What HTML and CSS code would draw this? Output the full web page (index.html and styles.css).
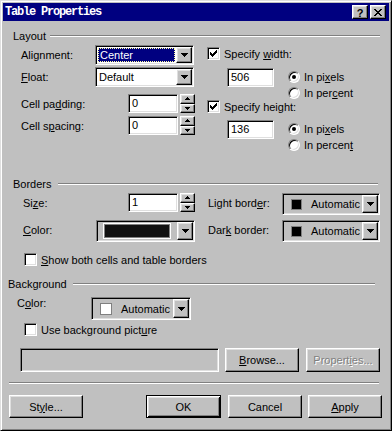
FILE: index.html
```html
<!DOCTYPE html>
<html lang="en">
<head>
  <meta charset="UTF-8">
  <meta name="viewport" content="width=device-width, initial-scale=1.0">
  <title>Table Properties</title>
  <link rel="stylesheet" href="styles.css">
</head>
<body>
  <div class="window">
    <div class="titlebar">
      <span class="title">Table Properties</span>
      <span class="tbtn raised help">?</span>
      <span class="tbtn raised"><svg width="8" height="7" viewBox="0 0 8 7"><path d="M0 0h2v1h1v1h2v-1h1v-1h2v1h-1v1h-1v1h-1v1h1v1h1v1h1v1h-2v-1h-1v-1h-2v1h-1v1h-2v-1h1v-1h1v-1h1v-1h-1v-1h-1v-1h-1z" fill="#000"/></svg></span>
    </div>

    <!-- Layout -->
    <div class="group-head head-layout"><span>Layout</span><i class="etch"></i></div>
    <div class="layout">
      <div class="col-left">
        <div class="row">
          <span class="lbl w74">Alignment:</span>
          <div class="combo sunken w99">
            <span class="val sel"><span>Center</span></span>
            <span class="drop raised"><svg width="7" height="4" viewBox="0 0 7 4"><path d="M0 0h7v1h-1v1h-1v1h-1v1h-1v-1h-1v-1h-1v-1h-1z"/></svg></span>
          </div>
        </div>
        <div class="row mt2">
          <span class="lbl w74"><u>F</u>loat:</span>
          <div class="combo sunken w99">
            <span class="val">Default</span>
            <span class="drop raised"><svg width="7" height="4" viewBox="0 0 7 4"><path d="M0 0h7v1h-1v1h-1v1h-1v1h-1v-1h-1v-1h-1v-1h-1z"/></svg></span>
          </div>
        </div>
        <div class="row mt7">
          <span class="lbl w107">Cell pa<u>d</u>ding:</span>
          <div class="spin">
            <span class="field sunken">0</span>
            <span class="spinner">
              <span class="sbtn raised"><svg width="5" height="3" viewBox="0 0 5 3"><path d="M0 3h5v-1h-1v-1h-1v-1h-1v1h-1v1h-1z"/></svg></span>
              <span class="sbtn raised"><svg width="5" height="3" viewBox="0 0 5 3"><path d="M0 0h5v1h-1v1h-1v1h-1v-1h-1v-1h-1z"/></svg></span>
            </span>
          </div>
        </div>
        <div class="row mt3">
          <span class="lbl w107">Cell s<u>p</u>acing:</span>
          <div class="spin">
            <span class="field sunken">0</span>
            <span class="spinner">
              <span class="sbtn raised"><svg width="5" height="3" viewBox="0 0 5 3"><path d="M0 3h5v-1h-1v-1h-1v-1h-1v1h-1v1h-1z"/></svg></span>
              <span class="sbtn raised"><svg width="5" height="3" viewBox="0 0 5 3"><path d="M0 0h5v1h-1v1h-1v1h-1v-1h-1v-1h-1z"/></svg></span>
            </span>
          </div>
        </div>
      </div>

      <div class="col-right">
        <div class="cb-row mt2">
          <span class="check sunken"><svg width="7" height="7" viewBox="0 0 7 7"><path d="M0 2h1v1h1v1h1v-1h1v-1h1v-1h1v-1h1v3h-1v1h-1v1h-1v1h-1v1h-1v-1h-1v-1h-1z"/></svg></span>
          <span>Specify <u>w</u>idth:</span>
        </div>
        <div class="in-row mt8">
          <span class="field sunken num">506</span>
          <div class="radios">
            <div class="radio-row"><span class="radio on"></span><span>In pi<u>x</u>els</span></div>
            <div class="radio-row"><span class="radio"></span><span>In per<u>c</u>ent</span></div>
          </div>
        </div>
        <div class="cb-row mt1">
          <span class="check sunken"><svg width="7" height="7" viewBox="0 0 7 7"><path d="M0 2h1v1h1v1h1v-1h1v-1h1v-1h1v-1h1v3h-1v1h-1v1h-1v1h-1v1h-1v-1h-1v-1h-1z"/></svg></span>
          <span>Specify hei<u>g</u>ht:</span>
        </div>
        <div class="in-row mt7">
          <span class="field sunken num">136</span>
          <div class="radios">
            <div class="radio-row"><span class="radio on"></span><span>In pi<u>x</u>els</span></div>
            <div class="radio-row"><span class="radio"></span><span>In percen<u>t</u></span></div>
          </div>
        </div>
      </div>
    </div>

    <!-- Borders -->
    <div class="group-head head-borders"><span>Borders</span><i class="etch"></i></div>
    <div class="b-row mt3">
      <span class="lbl w105 lh20">Si<u>z</u>e:</span>
      <div class="spin">
        <span class="field sunken">1</span>
        <span class="spinner">
          <span class="sbtn raised"><svg width="5" height="3" viewBox="0 0 5 3"><path d="M0 3h5v-1h-1v-1h-1v-1h-1v1h-1v1h-1z"/></svg></span>
          <span class="sbtn raised"><svg width="5" height="3" viewBox="0 0 5 3"><path d="M0 0h5v1h-1v1h-1v1h-1v-1h-1v-1h-1z"/></svg></span>
        </span>
      </div>
      <span class="lbl w74 side">Light bord<u>e</u>r:</span>
      <div class="ccombo sunken w98">
        <span class="swatch dark"></span>
        <span class="cval">Automatic</span>
        <span class="drop raised"><svg width="7" height="4" viewBox="0 0 7 4"><path d="M0 0h7v1h-1v1h-1v1h-1v1h-1v-1h-1v-1h-1v-1h-1z"/></svg></span>
      </div>
    </div>
    <div class="b-row mt5">
      <span class="lbl w73"><u>C</u>olor:</span>
      <div class="ccombo sunken w99">
        <span class="bar"></span>
        <span class="drop raised"><svg width="7" height="4" viewBox="0 0 7 4"><path d="M0 0h7v1h-1v1h-1v1h-1v1h-1v-1h-1v-1h-1v-1h-1z"/></svg></span>
      </div>
      <span class="lbl w74 side">Dar<u>k</u> border:</span>
      <div class="ccombo sunken w98">
        <span class="swatch dark"></span>
        <span class="cval">Automatic</span>
        <span class="drop raised"><svg width="7" height="4" viewBox="0 0 7 4"><path d="M0 0h7v1h-1v1h-1v1h-1v1h-1v-1h-1v-1h-1v-1h-1z"/></svg></span>
      </div>
    </div>
    <div class="cb-row cb-indent mt11">
      <span class="check sunken"></span>
      <span><u>S</u>how both cells and table borders</span>
    </div>

    <!-- Background -->
    <div class="group-head head-bg"><span>Background</span><i class="etch"></i></div>
    <div class="bg-row">
      <span class="lbl w74">C<u>o</u>lor:</span>
      <div class="ccombo sunken w100">
        <span class="swatch light"></span>
        <span class="cval">Automatic</span>
        <span class="drop raised"><svg width="7" height="4" viewBox="0 0 7 4"><path d="M0 0h7v1h-1v1h-1v1h-1v1h-1v-1h-1v-1h-1v-1h-1z"/></svg></span>
      </div>
    </div>
    <div class="cb-row cb-indent mt3">
      <span class="check sunken"></span>
      <span>Use background pict<u>u</u>re</span>
    </div>
    <div class="file-row">
      <span class="field sunken file gray"></span>
      <span class="btn raised browse"><u>B</u>rowse...</span>
      <span class="btn raised props disabled">Propert<u>i</u>es...</span>
    </div>

    <i class="etch sep"></i>

    <div class="btn-row">
      <span class="btn raised">St<u>y</u>le...</span>
      <span class="btn raised default ok">OK</span>
      <span class="btn raised cancel">Cancel</span>
      <span class="btn raised apply"><u>A</u>pply</span>
    </div>
  </div>
</body>
</html>
```

FILE: styles.css
```css
body {
  margin: 0;
  background: #c0c0c0;
  font-family: "Liberation Sans", Arial, sans-serif;
  font-size: 11px;
  color: #000;
}
u {
  text-decoration: underline;
  text-underline-offset: 1px;
}
.window {
  width: 392px;
  height: 431px;
  box-sizing: border-box;
  background: #c0c0c0;
  border: 1px solid;
  border-color: #dfdfdf #000 #000 #dfdfdf;
  box-shadow: inset 1px 1px #fff, inset -1px -1px #808080;
  padding: 2px;
}

/* 3d frames */
.raised {
  box-sizing: border-box;
  background: #c0c0c0;
  border: 1px solid;
  border-color: #fff #000 #000 #fff;
  box-shadow: inset -1px -1px #808080, inset 1px 1px #dfdfdf;
}
.sunken {
  box-sizing: border-box;
  background: #fff;
  border: 1px solid;
  border-color: #808080 #fff #fff #808080;
  box-shadow: inset 1px 1px #000, inset -1px -1px #dfdfdf;
  padding: 1px;
}
.etch {
  display: block;
  height: 0;
  border-top: 1px solid #808080;
  border-bottom: 1px solid #fff;
}

/* title bar */
.titlebar {
  display: flex;
  align-items: center;
  height: 18px;
  background: #000080;
  color: #fff;
  padding: 0 3px 0 2px;
}
.title {
  flex: 1;
  font-family: "Liberation Mono", "Courier New", monospace;
  font-weight: bold;
  font-size: 12px;
  letter-spacing: -1.2px;
}
.tbtn {
  width: 16px;
  height: 14px;
  margin-left: 2px;
  display: flex;
  align-items: center;
  justify-content: center;
  color: #000;
}
.help {
  font-weight: bold;
  font-size: 11px;
  padding-top: 1px;
}

/* group headers */
.group-head {
  display: flex;
  align-items: center;
  height: 13px;
}
.group-head .etch {
  flex: 1;
  margin-left: 4px;
}
.head-layout {
  margin-top: 8px;
  padding-left: 10px;
  margin-right: 9px;
}
.head-borders {
  margin-top: 26px;
  padding-left: 10px;
  margin-right: 11px;
}
.head-borders .etch {
  margin-left: 6px;
}
.head-bg {
  margin-top: 11px;
  padding-left: 5px;
  margin-right: 14px;
}
.head-bg .etch {
  margin-left: 6px;
}

.mt1 { margin-top: 1px; }
.mt2 { margin-top: 2px; }
.mt3 { margin-top: 3px; }
.mt5 { margin-top: 5px; }
.mt7 { margin-top: 7px; }
.mt8 { margin-top: 8px; }
.mt11 { margin-top: 11px; }

.lbl { flex: none; }
.w73 { width: 73px; }
.w74 { width: 74px; }
.w105 { width: 105px; }
.w107 { width: 107px; }
.lh20 { line-height: 20px; }

/* layout section */
.layout {
  display: flex;
  margin-top: 3px;
  padding-left: 18px;
  height: 106px;
}
.col-left {
  width: 175px;
}
.col-right {
  margin-left: 11px;
}
.row {
  display: flex;
  align-items: center;
}

.combo {
  display: flex;
  height: 20px;
}
.w98 { width: 98px; }
.w99 { width: 99px; }
.w100 { width: 100px; }
.combo .val {
  flex: 1;
  line-height: 16px;
  padding-left: 2px;
}
.combo .val.sel {
  padding: 0;
  margin: 1px;
  display: flex;
}
.combo .val.sel span {
  flex: 1;
  background: #000080;
  color: #fff;
  border: 1px dotted #ffff9f;
  line-height: 12px;
  padding-left: 1px;
}
.drop {
  width: 16px;
  display: flex;
  align-items: center;
  justify-content: center;
}
.drop svg, .sbtn svg {
  display: block;
}

.spin {
  display: flex;
}
.field {
  display: block;
  width: 50px;
  height: 19px;
  line-height: 15px;
  padding-left: 3px;
}
.field.num {
  width: 47px;
}
.spinner {
  display: flex;
  flex-direction: column;
  margin-left: 2px;
  width: 15px;
  height: 19px;
}
.sbtn {
  flex: 1;
  display: flex;
  align-items: center;
  justify-content: center;
}

.cb-row {
  display: flex;
  align-items: center;
  gap: 4px;
  height: 13px;
}
.cb-indent {
  margin-left: 21px;
}
.check {
  width: 13px;
  height: 13px;
  padding: 2px 0 0 2px;
}
.check svg {
  display: block;
}
.in-row {
  display: flex;
  align-items: flex-start;
  margin-left: 20px;
}
.radios {
  margin-left: 14px;
  margin-top: 3px;
  display: flex;
  flex-direction: column;
  gap: 4px;
}
.radio-row {
  display: flex;
  align-items: center;
  gap: 4px;
  height: 12px;
}
.radio {
  position: relative;
  box-sizing: border-box;
  width: 12px;
  height: 12px;
  border-radius: 50%;
  background: #fff;
  border: 1px solid;
  border-color: #808080 #fff #fff #808080;
  box-shadow: inset 1px 1px #000, inset -1px -1px #dfdfdf;
}
.radio.on::after {
  content: "";
  position: absolute;
  left: 3px;
  top: 3px;
  width: 4px;
  height: 4px;
  border-radius: 50%;
  background: #000;
}

/* borders section */
.b-row {
  display: flex;
  align-items: flex-start;
  padding-left: 20px;
  height: 22px;
}
.b-row .lbl {
  line-height: 21px;
}
.side {
  margin-left: 13px;
}
.ccombo {
  display: flex;
  align-items: center;
  height: 22px;
  background: #c0c0c0;
}
.ccombo .drop {
  align-self: stretch;
  margin-left: auto;
}
.swatch {
  width: 11px;
  height: 11px;
  box-sizing: border-box;
  margin-left: 7px;
  border: 1px solid #808080;
}
.swatch.dark {
  background: #000;
}
.swatch.light {
  background: #fff;
  width: 12px;
  height: 12px;
}
.cval {
  margin-left: 9px;
}
.bar {
  width: 64px;
  height: 12px;
  margin-left: 6px;
  background: #111;
  border: 1px solid #808080;
  box-shadow: 0 0 0 1px #fff;
}

/* background section */
.bg-row {
  display: flex;
  align-items: center;
  margin-top: 7px;
  padding-left: 14px;
  height: 23px;
}
.bg-row .lbl {
  align-self: flex-start;
  line-height: 13px;
}
.bg-row .ccombo {
  height: 23px;
}
.file-row {
  display: flex;
  margin-top: 12px;
  padding-left: 17px;
  height: 24px;
}
.field.file {
  width: 199px;
  height: 24px;
}
.field.gray {
  background: #c0c0c0;
}
.btn {
  display: flex;
  align-items: center;
  justify-content: center;
  width: 74px;
  height: 24px;
}
.browse { margin-left: 6px; }
.props { margin-left: 7px; }
.disabled {
  color: #808080;
  text-shadow: 1px 1px #fff;
}
.sep {
  margin-top: 10px;
  margin-left: 6px;
  width: 370px;
}
.btn-row {
  display: flex;
  margin-top: 11px;
  padding-left: 6px;
}
.btn-row .btn {
  height: 23px;
}
.ok {
  margin-left: 63px;
  width: 75px;
}
.cancel { margin-left: 7px; }
.apply { margin-left: 6px; }
.default {
  border-color: #000;
  box-shadow: inset 1px 1px #fff, inset -1px -1px #000, inset 2px 2px #dfdfdf, inset -2px -2px #808080;
}
```
